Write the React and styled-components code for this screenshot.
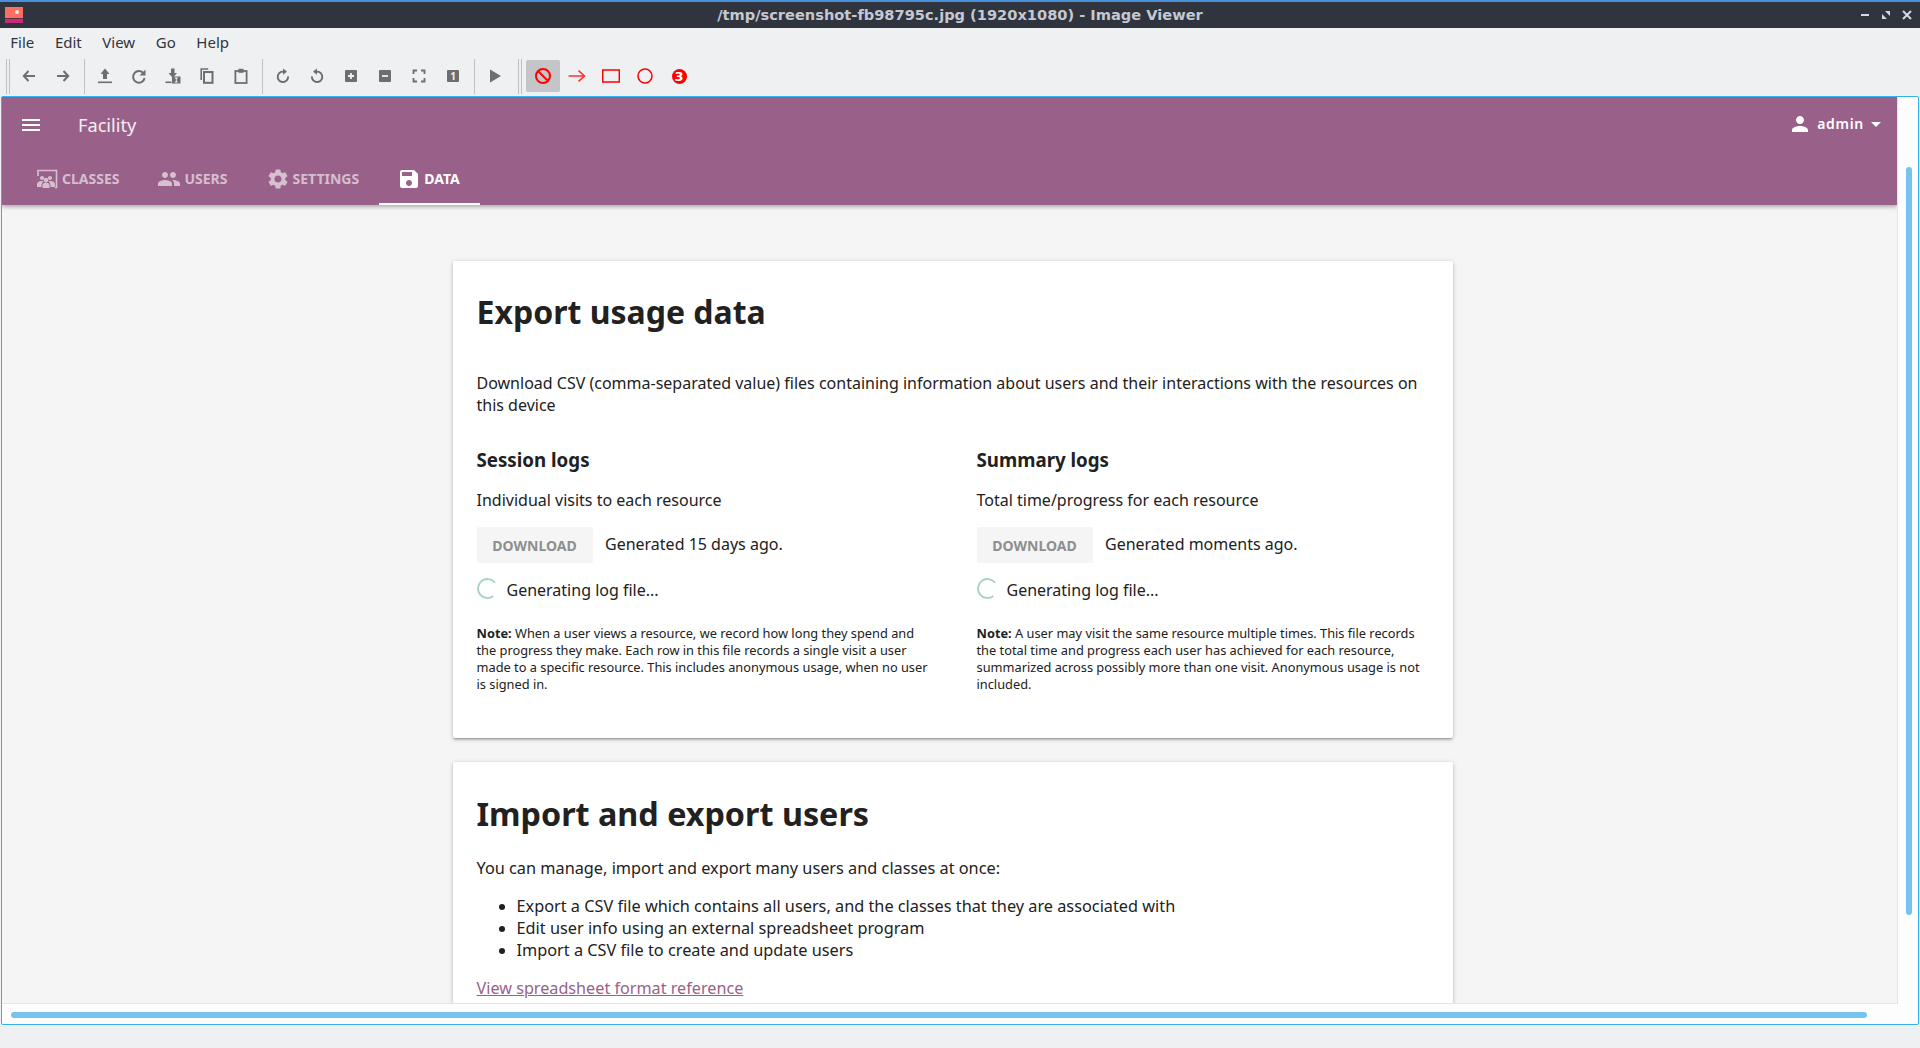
import styled, { createGlobalStyle } from "styled-components";
import { MdMenu, MdPeople, MdSettings, MdSave, MdPerson, MdArrowDropDown } from "react-icons/md";

const GlobalStyle = createGlobalStyle`
  html, body {
    margin: 0;
    padding: 0;
    overflow: hidden;
    background: #eff0f2;
  }
  * {
    box-sizing: border-box;
  }
`;

const Root = styled.div`
  width: 1920px;
  height: 1048px;
  display: flex;
  flex-direction: column;
  font-family: "Noto Sans", sans-serif;
  color: #212121;
`;

const TitleBar = styled.header`
  height: 28px;
  flex: none;
  display: flex;
  align-items: center;
  background: #2f343f;
  border-top: 2px solid #4a90d9;
  padding: 0 8px 0 5px;
`;

const TitleText = styled.div`
  flex: 1;
  text-align: center;
  font-family: "DejaVu Sans", sans-serif;
  font-weight: 700;
  font-size: 14.6px;
  color: #c4c8d0;
  padding-left: 37px;
  margin-top: -2px;
`;

const WindowButtons = styled.div`
  display: flex;
  align-items: center;
  gap: 11px;
  color: #d3dae3;
`;

const MenuBar = styled.nav`
  height: 28px;
  flex: none;
  display: flex;
  align-items: center;
  font-size: 15px;
  color: #2f343f;
`;

const MenuItem = styled.span`
  padding: 0 10.3px;
`;

const Toolbar = styled.div`
  height: 40px;
  flex: none;
  display: flex;
  align-items: center;
  padding-left: 6px;
`;

const Grip = styled.div`
  width: 4px;
  height: 35px;
  flex: none;
  margin-right: ${(p) => p.$after || 0}px;
  margin-left: ${(p) => p.$before || 0}px;
  border-left: 1px solid #bdbfc3;
  border-right: 1px solid #bdbfc3;
`;

const Separator = styled.div`
  width: 1px;
  height: 35px;
  flex: none;
  margin: 0 3.5px;
  background: #c0c2c6;
`;

const ToolButton = styled.div`
  width: 34px;
  height: 32px;
  flex: none;
  display: flex;
  align-items: center;
  justify-content: center;
  border-radius: 2px;
  color: #6e6e6e;
  background: ${(p) => (p.$active ? "#c4c5c8" : "transparent")};
`;

const NumberBadge = styled.span`
  width: 15px;
  height: 15px;
  display: flex;
  align-items: center;
  justify-content: center;
  border-radius: 50%;
  background: #f00;
  color: #fff;
  font-family: "DejaVu Sans", sans-serif;
  font-size: 13px;
  font-weight: 700;
`;

const Viewport = styled.main`
  flex: 1;
  margin: 0 1px 23px;
  border: 1px solid #33b1f1;
  border-radius: 2px;
  background: #fdfdfd;
  display: grid;
  grid-template-columns: 1fr 20px;
  grid-template-rows: 1fr 20px;
  min-height: 0;
`;

const Page = styled.div`
  display: flex;
  flex-direction: column;
  min-height: 0;
  overflow: hidden;
  background: #f5f5f5;
  border-right: 1px solid #e4e4e4;
  border-bottom: 1px solid #e4e4e4;
`;

const VTrack = styled.div`
  padding: 70px 0 0 8px;
`;

const VThumb = styled.div`
  width: 6px;
  height: 748px;
  border-radius: 3px;
  background: #74c4ef;
`;

const HTrack = styled.div`
  grid-column: 1 / 3;
  padding: 8px 0 0 9px;
`;

const HThumb = styled.div`
  width: 1856px;
  height: 6px;
  border-radius: 3px;
  background: #74c4ef;
`;

const AppBar = styled.div`
  flex: none;
  height: 108px;
  background: #996189;
  color: #fff;
  box-shadow: 0 2px 4px rgba(0, 0, 0, 0.3);
  position: relative;
`;

const TopRow = styled.div`
  height: 56px;
  display: flex;
  align-items: center;
  padding: 0 9px 0 17px;
`;

const AppTitle = styled.div`
  flex: 1;
  margin-left: 35px;
  font-size: 18.2px;
  color: #f4eef2;
`;

const UserMenu = styled.div`
  display: flex;
  align-items: center;
  font-size: 14px;
  font-weight: 600;
  letter-spacing: 0.7px;
  margin-top: -3px;
`;

const UserName = styled.span`
  margin: 0 0 0 5px;
`;

const Tabs = styled.div`
  height: 52px;
  display: flex;
  padding-left: 15px;
`;

const Tab = styled.div`
  display: flex;
  align-items: center;
  gap: 3px;
  padding: 1px 20px 0 18px;
  font-size: 14px;
  font-weight: 700;
  text-transform: uppercase;
  color: ${(p) => (p.$active ? "#fff" : "rgba(255, 255, 255, 0.6)")};
  border-bottom: 2px solid ${(p) => (p.$active ? "#fff" : "transparent")};
`;

const Content = styled.div`
  flex: 1;
  min-height: 0;
  overflow: hidden;
  padding: 56px 0 0 451px;
`;

const Card = styled.section`
  width: 1000px;
  padding: 24px 24px 24px 23.5px;
  margin-bottom: 24px;
  background: #fff;
  border-radius: 2px;
  box-shadow: 0 1px 5px rgba(0, 0, 0, 0.2), 0 2px 2px rgba(0, 0, 0, 0.14),
    0 3px 1px -2px rgba(0, 0, 0, 0.12);
`;

const Heading = styled.h1`
  margin: 5px 0 0;
  font-size: ${(p) => p.$size || 32}px;
  font-weight: 700;
  line-height: 44px;
`;

const Paragraph = styled.p`
  margin: ${(p) => p.$top}px 0 0;
  font-size: ${(p) => p.$size || 16}px;
  line-height: 22px;
`;

const Columns = styled.div`
  display: grid;
  grid-template-columns: 500px 1fr;
  margin-top: 31px;
  margin-bottom: 21px;
`;

const SubHeading = styled.h2`
  margin: 0;
  font-size: 18.72px;
  font-weight: 700;
  line-height: 26px;
`;

const DownloadRow = styled.div`
  display: flex;
  align-items: center;
  margin-top: 16px;
  font-size: 16px;
`;

const DownloadButton = styled.div`
  width: 116px;
  height: 36px;
  margin-right: 12.5px;
  display: flex;
  align-items: center;
  justify-content: center;
  border-radius: 2px;
  background: #f5f5f5;
  color: #8e8e8e;
  font-size: 14px;
  font-weight: 700;
`;

const GeneratedText = styled.span`
  padding-bottom: 2px;
`;

const ProgressRow = styled.div`
  display: flex;
  align-items: flex-start;
  gap: 9px;
  margin-top: 14px;
  padding-top: 2px;
  font-size: 16px;
  line-height: 22px;
`;

const Spinner = styled.svg`
  width: 21px;
  height: 21px;
  flex: none;
  margin-top: -1px;
`;

const Note = styled.p`
  margin: 24px 0 0;
  max-width: 456px;
  font-size: 12.8px;
  line-height: 17px;
`;

const BulletList = styled.ul`
  margin: 16px 0 0;
  padding: 0 0 0 40px;
  font-size: 16.3px;
  line-height: 22px;
`;

const SpreadsheetLink = styled.a`
  display: block;
  margin-top: 16px;
  font-size: 16.2px;
  line-height: 22px;
  color: #996189;
  text-decoration: underline;
`;

const AppLogo = () => (
  <svg width="18" height="16" viewBox="0 0 18 16">
    <rect width="18" height="11" fill="#ff6f61" />
    <circle cx="12" cy="5" r="2" fill="#ffe9d6" />
    <rect y="11" width="18" height="1" fill="#5c3044" />
    <rect y="12" width="18" height="4" fill="#c92a75" />
  </svg>
);

const IconSvg = ({ children, size = 18 }) => (
  <svg width={size} height={size} viewBox="0 0 18 18" fill="none">
    {children}
  </svg>
);

const G = "currentColor";

const toolIcons = {
  back: <path d="M15 9H4M8.5 4 3.8 9l4.7 5" stroke={G} strokeWidth="2" />,
  forward: <path d="M3 9h11M9.5 4l4.7 5-4.7 5" stroke={G} strokeWidth="2" />,
  upload: (
    <>
      <path d="M9 1.5 13.5 7H11v5H7V7H4.5z" fill={G} />
      <rect x="2" y="14.5" width="14" height="1.6" fill={G} />
    </>
  ),
  refresh: (
    <>
      <path d="M13.6 6.5A5.8 5.8 0 1 0 14.6 11" stroke={G} strokeWidth="2" />
      <path d="M15.5 2.6v6h-6z" fill={G} />
    </>
  ),
  saveAs: (
    <>
      <path d="M7 1.5h3.5V6H13L8.7 11 4.5 6H7z" fill={G} />
      <rect x="1.5" y="14.5" width="6" height="1.6" fill={G} />
      <rect x="8" y="9.5" width="8.5" height="7" fill={G} />
      <path d="M10.8 11h3M10.8 15h3M12.3 11v4" stroke="#eff0f2" strokeWidth="1" />
    </>
  ),
  copy: (
    <>
      <path d="M3.2 13V2h7" stroke={G} strokeWidth="1.6" />
      <rect x="6" y="5" width="8.5" height="10.8" stroke={G} strokeWidth="2" />
    </>
  ),
  paste: (
    <>
      <rect x="3.4" y="4" width="11.2" height="12" stroke={G} strokeWidth="1.8" />
      <rect x="6.5" y="1.8" width="5" height="4" fill={G} />
    </>
  ),
  rotateCw: (
    <>
      <path d="M11.5 5.3a5.2 5.2 0 1 0 2.6 4" stroke={G} strokeWidth="1.9" />
      <path d="M9 1.5v6.2l4-3.1z" fill={G} />
    </>
  ),
  rotateCcw: (
    <>
      <path d="M6.5 5.3a5.2 5.2 0 1 1-2.6 4" stroke={G} strokeWidth="1.9" />
      <path d="M9 1.5v6.2l-4-3.1z" fill={G} />
    </>
  ),
  zoomIn: (
    <>
      <rect x="3" y="3" width="12" height="12" rx="1" fill={G} />
      <path d="M6 9h6M9 6v6" stroke="#eff0f2" strokeWidth="1.8" />
    </>
  ),
  zoomOut: (
    <>
      <rect x="3" y="3" width="12" height="12" rx="1" fill={G} />
      <path d="M6 9h6" stroke="#eff0f2" strokeWidth="1.8" />
    </>
  ),
  fit: (
    <path
      d="M7 3.5H3.5V7M11 3.5h3.5V7M7 14.5H3.5V11M11 14.5h3.5V11"
      stroke={G}
      strokeWidth="1.8"
    />
  ),
  actual: (
    <>
      <rect x="3" y="3" width="12" height="12" rx="1" fill={G} />
      <text x="9" y="12.6" textAnchor="middle" fontSize="10" fontWeight="700" fontFamily="Noto Sans" fill="#eff0f2">
        1
      </text>
    </>
  ),
  play: <path d="M4 2.5 15 9 4 15.5z" fill={G} />,
  blocked: (
    <>
      <circle cx="9" cy="9" r="7" stroke="#f00" strokeWidth="2" />
      <path d="M4.5 4.500l9 9" stroke="#f00" strokeWidth="2" />
    </>
  ),
  arrow: <path d="M.5 9h16M10.500 3.600 16.500 9l-6 5.400" stroke="#f33" strokeWidth="1.6" />,
  box: <rect x=".7" y="3" width="16.600" height="12" stroke="#f00" strokeWidth="1.5" />,
  ring: <circle cx="9" cy="9" r="7" stroke="#f00" strokeWidth="1.5" />,
};

const ToolIcon = ({ name, active }) => (
  <ToolButton $active={active}>
    <IconSvg>{toolIcons[name]}</IconSvg>
  </ToolButton>
);

const ClassesIcon = () => (
  <svg width="24" height="24" viewBox="0 0 24 24" fill="currentColor">
    <path d="M3 9V3.500h18.500v17H20" fill="none" stroke="currentColor" strokeWidth="1.6" />
    <circle cx="7" cy="11" r="2.100" />
    <circle cx="15" cy="11" r="2.100" />
    <circle cx="11" cy="13" r="2.300" />
    <path d="M2 20v-2.500C2 15 4 14 7 14c1 0 1.500.2 1.500.2C7 15.500 6.500 17 6.500 20zM20 20v-2.500C20 15 18 14 15 14c-1 0-1.500.2-1.500.2 1.500 1.300 2 2.800 2 5.800zM7.500 21v-2.500c0-2 1.500-3 3.500-3s3.500 1 3.500 3V21z" />
  </svg>
);

const tabs = [
  { label: "Classes", icon: <ClassesIcon /> },
  { label: "Users", icon: <MdPeople size={24} /> },
  { label: "Settings", icon: <MdSettings size={24} /> },
  { label: "Data", icon: <MdSave size={24} />, active: true },
];

const LogColumn = ({ title, subtitle, generated, note }) => (
  <div>
    <SubHeading>{title}</SubHeading>
    <Paragraph $top={16}>{subtitle}</Paragraph>
    <DownloadRow>
      <DownloadButton>DOWNLOAD</DownloadButton>
      <GeneratedText>{generated}</GeneratedText>
    </DownloadRow>
    <ProgressRow>
      <Spinner viewBox="0 0 21 21" fill="none">
        <path d="M18 4.700A9.500 9.500 0 1 0 16.350 18" stroke="#a4d2c8" strokeWidth="1.800" />
      </Spinner>
      <span>Generating log file...</span>
    </ProgressRow>
    <Note>
      <strong>Note:</strong> {note}
    </Note>
  </div>
);

export default function App() {
  return (
    <Root>
      <GlobalStyle />
      <TitleBar>
        <AppLogo />
        <TitleText>/tmp/screenshot-fb98795c.jpg (1920x1080) - Image Viewer</TitleText>
        <WindowButtons>
          <svg width="10" height="10" viewBox="0 0 10 10">
            <rect x="1" y="4" width="8" height="2" fill="currentColor" />
          </svg>
          <svg width="10" height="10" viewBox="0 0 10 10">
            <path d="M4 1h5v5zM1 4v5h5z" fill="currentColor" />
          </svg>
          <svg width="10" height="10" viewBox="0 0 10 10">
            <path d="M1 1l8 8M9 1 1 9" stroke="currentColor" strokeWidth="2" />
          </svg>
        </WindowButtons>
      </TitleBar>
      <MenuBar>
        {["File", "Edit", "View", "Go", "Help"].map((item) => (
          <MenuItem key={item}>{item}</MenuItem>
        ))}
      </MenuBar>
      <Toolbar>
        <Grip $after={2} />
        <ToolIcon name="back" />
        <ToolIcon name="forward" />
        <Separator />
        <ToolIcon name="upload" />
        <ToolIcon name="refresh" />
        <ToolIcon name="saveAs" />
        <ToolIcon name="copy" />
        <ToolIcon name="paste" />
        <Separator />
        <ToolIcon name="rotateCw" />
        <ToolIcon name="rotateCcw" />
        <ToolIcon name="zoomIn" />
        <ToolIcon name="zoomOut" />
        <ToolIcon name="fit" />
        <ToolIcon name="actual" />
        <Separator />
        <ToolIcon name="play" />
        <Grip $before={6} $after={4} />
        <ToolIcon name="blocked" active />
        <ToolIcon name="arrow" />
        <ToolIcon name="box" />
        <ToolIcon name="ring" />
        <ToolButton>
          <NumberBadge>3</NumberBadge>
        </ToolButton>
      </Toolbar>
      <Viewport>
        <Page>
          <AppBar>
            <TopRow>
              <MdMenu size={24} />
              <AppTitle>Facility</AppTitle>
              <UserMenu>
                <MdPerson size={24} />
                <UserName>admin</UserName>
                <MdArrowDropDown size={24} />
              </UserMenu>
            </TopRow>
            <Tabs>
              {tabs.map((tab) => (
                <Tab key={tab.label} $active={tab.active}>
                  {tab.icon}
                  <span>{tab.label}</span>
                </Tab>
              ))}
            </Tabs>
          </AppBar>
          <Content>
            <Card>
              <Heading>Export usage data</Heading>
              <Paragraph $top={38}>
                Download CSV (comma-separated value) files containing information about users and
                their interactions with the resources on this device
              </Paragraph>
              <Columns>
                <LogColumn
                  title="Session logs"
                  subtitle="Individual visits to each resource"
                  generated="Generated 15 days ago."
                  note="When a user views a resource, we record how long they spend and the progress they make. Each row in this file records a single visit a user made to a specific resource. This includes anonymous usage, when no user is signed in."
                />
                <LogColumn
                  title="Summary logs"
                  subtitle="Total time/progress for each resource"
                  generated="Generated moments ago."
                  note="A user may visit the same resource multiple times. This file records the total time and progress each user has achieved for each resource, summarized across possibly more than one visit. Anonymous usage is not included."
                />
              </Columns>
            </Card>
            <Card>
              <Heading $size={32.3}>Import and export users</Heading>
              <Paragraph $top={22} $size={16.3}>
                You can manage, import and export many users and classes at once:
              </Paragraph>
              <BulletList>
                <li>Export a CSV file which contains all users, and the classes that they are associated with</li>
                <li>Edit user info using an external spreadsheet program</li>
                <li>Import a CSV file to create and update users</li>
              </BulletList>
              <SpreadsheetLink href="#">View spreadsheet format reference</SpreadsheetLink>
            </Card>
          </Content>
        </Page>
        <VTrack>
          <VThumb />
        </VTrack>
        <HTrack>
          <HThumb />
        </HTrack>
      </Viewport>
    </Root>
  );
}
